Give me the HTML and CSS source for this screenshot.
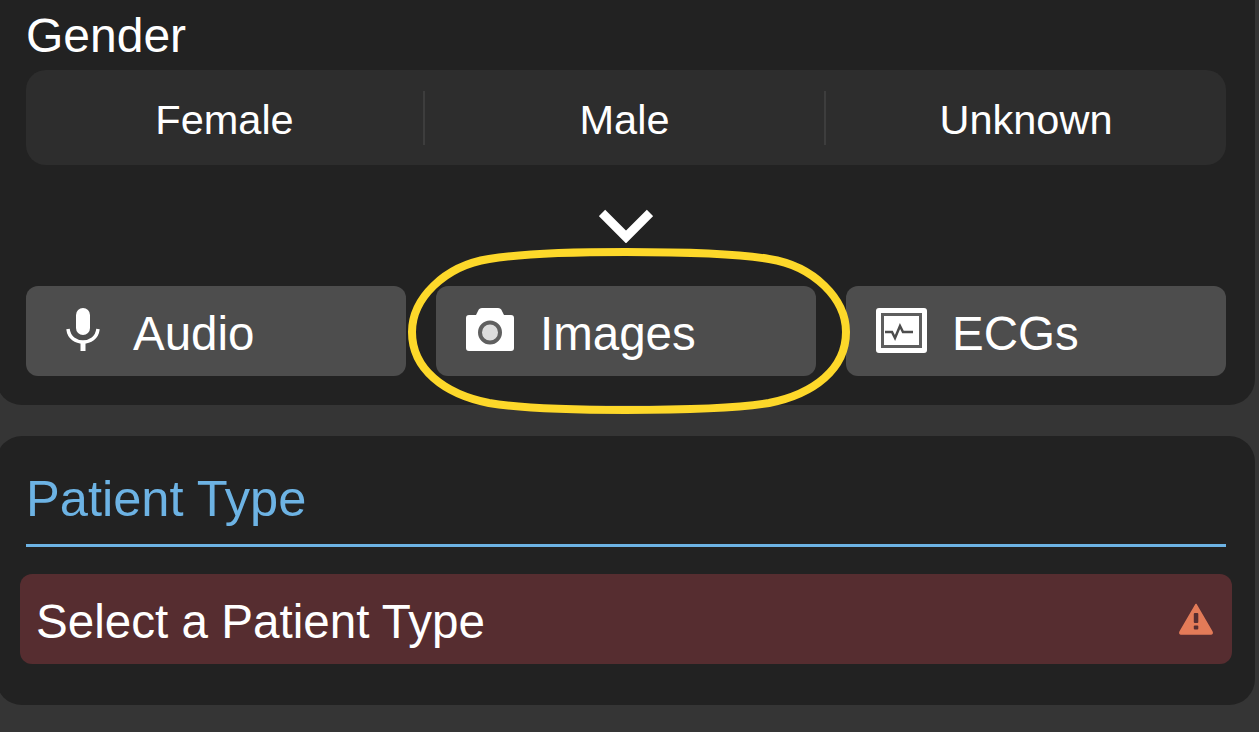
FILE: index.html
```html
<!DOCTYPE html>
<html>
  <head>
    <meta http-equiv="content-type" content="text/html; charset=UTF-8">
    <title>Patient Details</title>
    <meta name="viewport" content="width=device-width">
    <link rel="stylesheet" href="styles.css">
  </head>
  <body>
    <section class="card cardTop">
      <h2 class="fieldLabel">Gender</h2>
      <div class="segmented">
        <div class="segment">Female</div>
        <div class="segment">Male</div>
        <div class="segment">Unknown</div>
      </div>
      <div class="chevronRow">
        <svg class="chevron" width="54" height="34" viewBox="0 0 54 34"><path d="M3 4 L27 28 L51 4" fill="none" stroke="#fff" stroke-width="9"/></svg>
      </div>
      <div class="mediaRow">
        <div class="mediaButton">
          <svg class="mediaIcon" width="59" height="46" viewBox="0 0 59 46">
            <rect x="22" y="0" width="14" height="27" rx="7" fill="#fff"/>
            <path d="M14 21 C15 30 22 34 29 34 C36 34 43 30 44 21" fill="none" stroke="#fff" stroke-width="3.500"/>
            <rect x="26.500" y="33" width="5" height="10" fill="#fff"/>
          </svg>
          <span class="mediaLabel">Audio</span>
        </div>
        <div class="mediaButton">
          <svg class="mediaIcon" width="56" height="46" viewBox="0 0 56 46">
            <path d="M5 7 H12 L14.500 2 C15 1 16 0 18 0 H34 C36 0 37 1 37.500 2 L40 7 H47 C49 7 50 8 50 10 V40 C50 42 49 43 47 43 H5 C3 43 2 42 2 40 V10 C2 8 3 7 5 7 Z" fill="#fff"/>
            <circle cx="26" cy="24.500" r="10" fill="#ddd" stroke="#5f5f5f" stroke-width="4"/>
          </svg>
          <span class="mediaLabel">Images</span>
        </div>
        <div class="mediaButton">
          <svg class="mediaIcon" width="58" height="46" viewBox="0 0 58 46">
            <rect x="2" y="0" width="51" height="45" rx="3" fill="#fff"/>
            <rect x="8.500" y="6.500" width="38" height="32" fill="#fff" stroke="#5e5e5e" stroke-width="3"/>
            <path d="M11 24 H18 L21 30 L26 18 L29 24 H39" fill="none" stroke="#4d4d4d" stroke-width="2.500"/>
          </svg>
          <span class="mediaLabel">ECGs</span>
        </div>
      </div>
    </section>
    <section class="card cardBottom">
      <h2 class="sectionTitle">Patient Type</h2>
      <div class="selectRow">
        <span class="selectLabel">Select a Patient Type</span>
        <svg width="36" height="32" viewBox="0 0 36 32">
          <path d="M18 1.500 L34 29 C34.500 30 34 31 33 31 H3 C2 31 1.500 30 2 29 Z" fill="#e37b58" stroke="#e37b58" stroke-width="1.500" stroke-linejoin="round"/>
          <rect x="15.800" y="10" width="4.500" height="10" rx="1" fill="#562d30"/>
          <rect x="15.800" y="22.500" width="4.500" height="4" rx="1" fill="#562d30"/>
        </svg>
      </div>
    </section>
    <svg class="highlight" width="450" height="172" viewBox="0 0 450 172">
      <path d="M222 8 C170 8 120 9 85 15 C40 22 8 55 8 88 C8 125 40 150 85 159 C120 165 170 166 222 166 C280 166 330 165 365 159 C410 150 442 125 442 88 C442 55 410 22 365 15 C330 9 280 8 222 8 Z" fill="none" stroke="#fdd82a" stroke-width="8"/>
    </svg>
  </body>
</html>
```

FILE: styles.css
```css
html, body {
  margin: 0;
  height: 732px;
  overflow: hidden;
}
body {
  position: relative;
  background-color: #353535;
  color: #fff;
  font-family: "Liberation Sans", Arial, sans-serif;
  font-size: 41.5px;
}
.card {
  background-color: #222;
  margin: 0 4px 0 -4px;
  border-radius: 26px;
  padding: 0 29px 0 30px;
}
.cardTop {
  height: 405px;
  border-radius: 0 0 26px 26px;
  overflow: hidden;
}
.cardBottom {
  margin-top: 31px;
  height: 269px;
}
.fieldLabel {
  margin: 0;
  height: 70px;
  font-size: 48px;
  font-weight: normal;
  line-height: 72px;
}
.segmented {
  display: grid;
  grid-template-columns: 399px 401px 400px;
  align-items: center;
  height: 95px;
  background-color: #2d2d2d;
  border-radius: 20px;
}
.segment {
  height: 54px;
  line-height: 58px;
  text-align: center;
  box-sizing: border-box;
}
.segment:not(:last-child) { border-right: 2px solid #3d3d3d; }
.chevronRow {
  display: flex;
  justify-content: center;
  align-items: flex-start;
  height: 121px;
  padding-top: 44px;
  box-sizing: border-box;
}
.mediaRow {
  display: flex;
  gap: 30px;
}
.mediaButton {
  flex: 1;
  display: flex;
  align-items: center;
  gap: 20px;
  height: 90px;
  padding-left: 28px;
  background-color: #4d4d4d;
  border-radius: 12px;
  font-size: 47.5px;
}
.mediaIcon { flex: none; }
.mediaLabel { padding-top: 5px; }
.sectionTitle {
  margin: 0;
  height: 108px;
  border-bottom: 3px solid #6db3e4;
  color: #6db3e4;
  font-size: 50.6px;
  font-weight: normal;
  line-height: 125px;
  box-sizing: content-box;
}
.selectRow {
  display: flex;
  justify-content: space-between;
  align-items: center;
  height: 90px;
  margin: 27px -6px 0;
  padding: 0 18px 0 16px;
  background-color: #562d30;
  border-radius: 12px;
  font-size: 47.6px;
}
.selectLabel { padding-top: 5px; }
.highlight {
  position: absolute;
  left: 404px;
  top: 244px;
}
```
